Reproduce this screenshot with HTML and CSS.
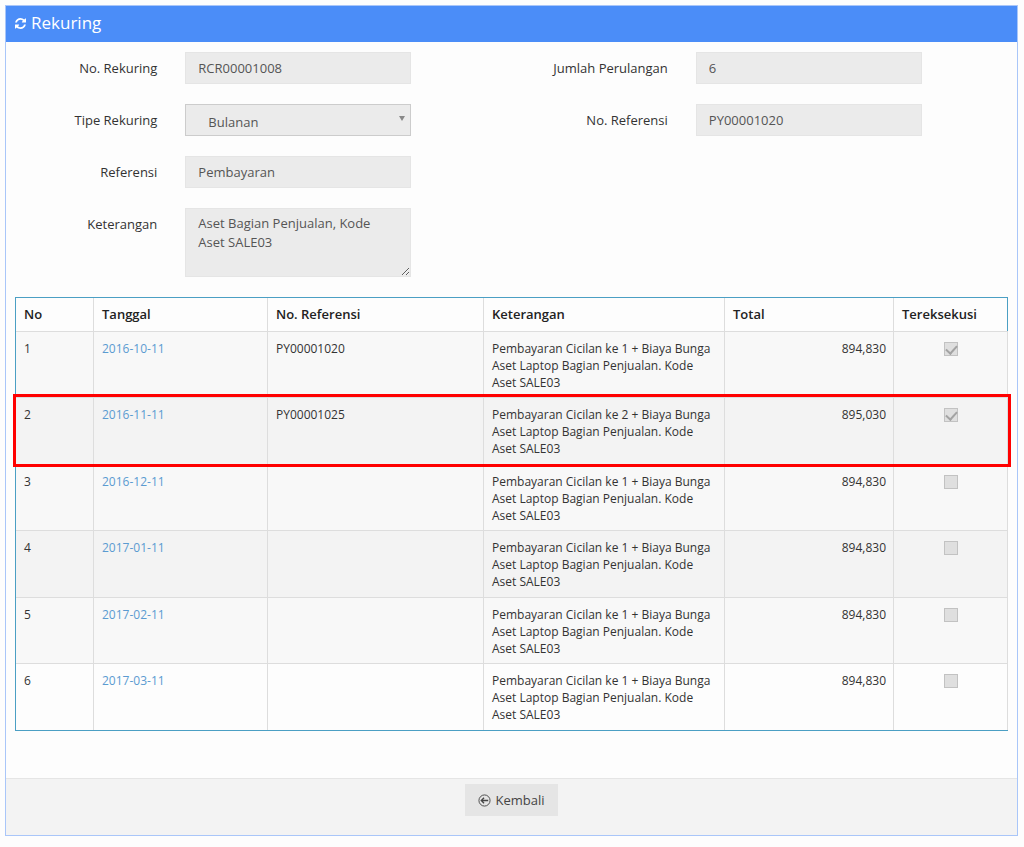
FILE: index.html
```
<!DOCTYPE html>
<html lang="id">
<head>
<meta charset="utf-8">
<title>Rekuring</title>
<link rel="stylesheet" href="styles.css">
</head>
<body>
<main class="panel">
  <header class="panel-head">
    <svg class="icon-refresh" viewBox="0 0 1536 1536" aria-hidden="true"><path fill="currentColor" d="M1511 928q0 5-1 7-64 268-268 434.500t-478 166.500q-146 0-282.500-55t-243.500-157l-129 129q-19 19-45 19t-45-19-19-45v-448q0-26 19-45t45-19h448q26 0 45 19t19 45-19 45l-137 137q71 66 161 102t187 36q134 0 250-65t186-179q11-17 53-117 8-23 30-23h192q13 0 22.500 9.500t9.500 22.500zm25-800v448q0 26-19 45t-45 19h-448q-26 0-45-19t-19-45 19-45l138-138q-148-137-349-137-134 0-250 65t-186 179q-11 17-53 117-8 23-30 23h-199q-13 0-22.500-9.500t-9.500-22.500v-7q65-268 270-434.500t480-166.500q146 0 284 55.500t245 156.500l130-129q19-19 45-19t45 19 19 45z"/></svg>
    <h1 class="title">Rekuring</h1>
  </header>
  <form class="panel-body">
    <div class="form-grid">
      <div class="form-col">
        <div class="field"><label for="no-rekuring">No. Rekuring</label><input class="control" id="no-rekuring" type="text" value="RCR00001008" readonly></div>
        <div class="field"><label for="tipe">Tipe Rekuring</label>
          <div class="select-wrap"><select class="control select" id="tipe"><option>Bulanan</option></select><span class="arrow"></span></div>
        </div>
        <div class="field"><label for="referensi">Referensi</label><input class="control" id="referensi" type="text" value="Pembayaran" readonly></div>
        <div class="field"><label for="keterangan">Keterangan</label><textarea class="control area" id="keterangan" readonly>Aset Bagian Penjualan, Kode Aset SALE03</textarea></div>
      </div>
      <div class="form-col">
        <div class="field"><label for="jumlah">Jumlah Perulangan</label><input class="control" id="jumlah" type="text" value="6" readonly></div>
        <div class="field"><label for="no-referensi">No. Referensi</label><input class="control" id="no-referensi" type="text" value="PY00001020" readonly></div>
      </div>
    </div>
    <table class="schedule">
      <colgroup><col class="c-no"><col class="c-date"><col class="c-ref"><col class="c-desc"><col class="c-total"><col class="c-done"></colgroup>
      <thead>
        <tr><th>No</th><th>Tanggal</th><th>No. Referensi</th><th>Keterangan</th><th>Total</th><th>Tereksekusi</th></tr>
      </thead>
      <tbody>
        <tr><td>1</td><td><a href="#">2016-10-11</a></td><td>PY00001020</td><td>Pembayaran Cicilan ke 1 + Biaya Bunga Aset Laptop Bagian Penjualan. Kode Aset SALE03</td><td class="num">894,830</td><td class="mid"><input class="tick" type="checkbox" aria-label="Tereksekusi 1" checked disabled></td></tr>
        <tr class="marked"><td>2</td><td><a href="#">2016-11-11</a></td><td>PY00001025</td><td>Pembayaran Cicilan ke 2 + Biaya Bunga Aset Laptop Bagian Penjualan. Kode Aset SALE03</td><td class="num">895,030</td><td class="mid"><input class="tick" type="checkbox" aria-label="Tereksekusi 2" checked disabled></td></tr>
        <tr><td>3</td><td><a href="#">2016-12-11</a></td><td></td><td>Pembayaran Cicilan ke 1 + Biaya Bunga Aset Laptop Bagian Penjualan. Kode Aset SALE03</td><td class="num">894,830</td><td class="mid"><input class="tick" type="checkbox" aria-label="Tereksekusi 3" disabled></td></tr>
        <tr class="shaded"><td>4</td><td><a href="#">2017-01-11</a></td><td></td><td>Pembayaran Cicilan ke 1 + Biaya Bunga Aset Laptop Bagian Penjualan. Kode Aset SALE03</td><td class="num">894,830</td><td class="mid"><input class="tick" type="checkbox" aria-label="Tereksekusi 4" disabled></td></tr>
        <tr><td>5</td><td><a href="#">2017-02-11</a></td><td></td><td>Pembayaran Cicilan ke 1 + Biaya Bunga Aset Laptop Bagian Penjualan. Kode Aset SALE03</td><td class="num">894,830</td><td class="mid"><input class="tick" type="checkbox" aria-label="Tereksekusi 5" disabled></td></tr>
        <tr><td>6</td><td><a href="#">2017-03-11</a></td><td></td><td>Pembayaran Cicilan ke 1 + Biaya Bunga Aset Laptop Bagian Penjualan. Kode Aset SALE03</td><td class="num">894,830</td><td class="mid"><input class="tick" type="checkbox" aria-label="Tereksekusi 6" disabled></td></tr>
      </tbody>
    </table>
  </form>
  <footer class="panel-foot">
    <button class="back" type="button"><svg class="icon-back" viewBox="0 0 14 14" fill="none" stroke="currentColor" aria-hidden="true"><circle cx="7" cy="7" r="6"/><path stroke-width="1.4" d="M11 7H4M6.500 4L3.500 7l3 3"/></svg>Kembali</button>
  </footer>
</main>
</body>
</html>
```
FILE: styles.css
```
* { box-sizing: border-box; }
body {
  margin: 0;
  padding: 5px 6px 5px 5px;
  background: #fdfdfd;
  color: #333;
  font: 13px/19px "Open Sans", sans-serif;
}
.panel { border: 1px solid #a9c6f9; }
.panel-head {
  display: flex;
  align-items: center;
  gap: 5px;
  height: 36px;
  padding: 0 9px 2px;
  background: #4b8df8;
  color: #fff;
}
.icon-refresh { width: 11px; height: 11px; }
.title { margin: 0; font-size: 17px; font-weight: 400; line-height: 24px; }
.panel-body { padding: 10px 9px 47px; }
.form-grid { display: grid; grid-template-columns: 1fr 1fr; gap: 28px; margin-bottom: 20px; }
.form-col { display: flex; flex-direction: column; gap: 20px; }
.field { display: grid; grid-template-columns: 29.5% 46.8%; column-gap: 28px; align-items: start; }
.field label { padding-top: 7px; text-align: right; }
.control {
  display: block;
  width: 100%;
  height: 32px;
  margin: 0;
  padding: 5px 12px;
  border: 1px solid #e5e5e5;
  border-radius: 0;
  background: #ebebeb;
  color: #555;
  font: inherit;
}
.select-wrap { position: relative; }
.select { appearance: none; padding: 7px 22px 3px; border-color: #ccc; }
.arrow {
  position: absolute;
  top: 12px;
  right: 6px;
  border: solid transparent;
  border-width: 5px 3px 0;
  border-top-color: #888;
  pointer-events: none;
}
.area { height: 69px; padding: 5px 12px; resize: vertical; }
.schedule {
  width: 100%;
  table-layout: fixed;
  border-collapse: separate;
  border-spacing: 0;
  border: solid #4b9fc4;
  border-width: 1px 0 1px 1px;
  font-size: 12px;
  line-height: 17px;
}
.c-no { width: 78px; }
.c-date { width: 174px; }
.c-ref { width: 216px; }
.c-desc { width: 241px; }
.c-total { width: 169px; }
th, td { padding: 8px 7px 8px 8px; border-right: 1px solid #ddd; text-align: left; vertical-align: top; }
th { color: #222; font-size: 13px; font-weight: 600; }
th:last-child { border-right-color: #4b9fc4; }
td { border-top: 1px solid #ddd; padding-bottom: 6px; }
tr:nth-child(even) td { padding-bottom: 7px; }
tbody tr:nth-child(odd) { background: #f8f8f8; }
.marked, .shaded { background: #f3f3f3; }
.marked { outline: 3px solid #f00; }
td a { color: #5b9bd1; text-decoration: none; }
.num { text-align: right; }
.mid { text-align: center; }
.tick {
  appearance: none;
  display: block;
  width: 14px;
  height: 14px;
  margin: 2px auto 0;
  border: 1px solid #c2c2c2;
  background: #dfdfdf;
}
.tick:checked::before {
  content: "";
  display: block;
  width: 5px;
  height: 9px;
  margin: 0 auto;
  border: solid #a3a3a3;
  border-width: 0 2px 2px 0;
  transform: rotate(42deg);
}
.panel-foot { display: flex; justify-content: center; padding: 5px 0 19px; border-top: 1px solid #e5e5e5; background: #f3f3f3; }
.back {
  display: flex;
  align-items: center;
  gap: 4px;
  height: 32px;
  padding: 0 13px;
  border: 0;
  background: #e5e5e5;
  color: #444;
  font: inherit;
}
.icon-back { width: 13px; height: 13px; }
```
